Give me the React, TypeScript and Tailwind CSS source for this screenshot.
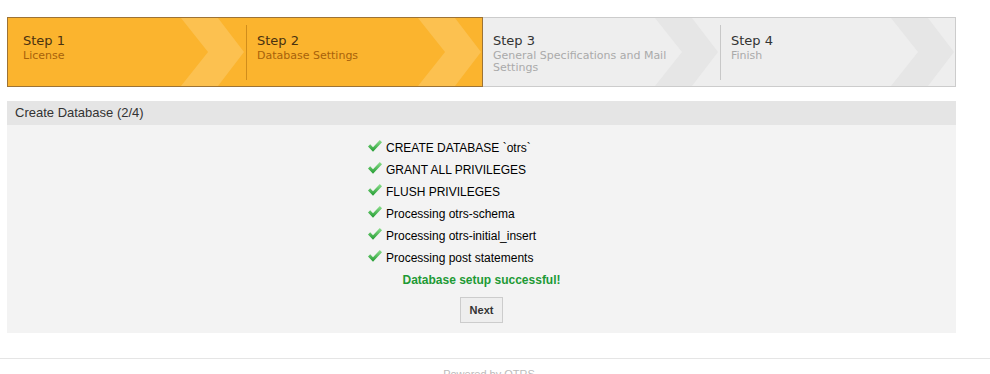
const steps = [
  { title: 'Step 1', sub: 'License', done: true },
  { title: 'Step 2', sub: 'Database Settings', done: true },
  { title: 'Step 3', sub: 'General Specifications and Mail Settings', done: false },
  { title: 'Step 4', sub: 'Finish', done: false },
];

const items = [
  'CREATE DATABASE `otrs`',
  'GRANT ALL PRIVILEGES',
  'FLUSH PRIVILEGES',
  'Processing otrs-schema',
  'Processing otrs-initial_insert',
  'Processing post statements',
];

function Chevron({ color }: { color: string }) {
  return (
    <svg className="absolute right-0 top-0 h-full w-[64px]" viewBox="0 0 64 68" preserveAspectRatio="none">
      <polygon points="0,0 37,0 63,34 37,68 0,68 27,34" fill={color} />
    </svg>
  );
}

function CheckIcon() {
  return (
    <svg width="14" height="13" viewBox="0 0 14 13" className="mr-[4px] mt-[-4px] shrink-0">
      <defs>
        <linearGradient id="chk" x1="0" y1="0" x2="0" y2="1">
          <stop offset="0" stopColor="#8ee08e" />
          <stop offset="1" stopColor="#1f9a2f" />
        </linearGradient>
      </defs>
      <polygon points="0,6.5 2.2,4.3 5,7.2 11.8,0 14,2.2 5,11.8" fill="url(#chk)" />
    </svg>
  );
}

function Step({ step, index }: { step: (typeof steps)[number]; index: number }) {
  const first = index === 0 || index === 2;
  return (
    <div className="relative flex h-full flex-1 items-center overflow-hidden">
      <Chevron color={step.done ? '#fcc150' : '#e6e6e6'} />
      {!first && (
        <div className={`ml-px h-[55px] w-px ${step.done ? 'bg-[#d08d1c]' : 'bg-[#c8c8c8]'}`} />
      )}
      <div
        className={`relative self-start pt-[15px] ${index === 0 ? 'pl-[15px]' : 'pl-[10px]'} w-[200px] font-['DejaVu_Sans',sans-serif]`}
      >
        <div className={`text-[13px] leading-[16px] ${step.done ? 'text-[#4a3210]' : 'text-[#333]'}`}>
          {step.title}
        </div>
        <div
          className={`mt-px text-[11px] leading-[12px] ${step.done ? 'text-[#a8620a]' : 'text-[#aaa]'} ${index === 2 ? 'w-[184px]' : ''}`}
        >
          {step.sub}
        </div>
      </div>
    </div>
  );
}

export default function App() {
  return (
    <div className="min-h-[374px] bg-white font-['Liberation_Sans',Arial,sans-serif]">
      <div className="ml-[7px] w-[949px] pt-[17px]">
        {/* Wizard steps */}
        <div className="flex h-[70px]">
          <div className="flex w-[476px] border border-[#9d7335] bg-[#fbb42e]">
            <Step step={steps[0]} index={0} />
            <Step step={steps[1]} index={1} />
          </div>
          <div className="flex w-[473px] border border-l-0 border-[#cccccc] bg-[#eeeeee]">
            <Step step={steps[2]} index={2} />
            <Step step={steps[3]} index={3} />
          </div>
        </div>

        {/* Panel */}
        <div className="mt-[14px]">
          <div className="flex h-[24px] items-center bg-[#e5e5e5] pl-[8px] text-[13px] text-[#333]">
            Create Database (2/4)
          </div>
          <div className="bg-[#f3f3f3] pb-[10px] pt-[12px]">
            <ul className="mx-auto w-[227px]">
              {items.map((item) => (
                <li key={item} className="flex h-[22px] items-center text-[12px] text-black">
                  <CheckIcon />
                  {item}
                </li>
              ))}
            </ul>
            <div className="flex h-[22px] items-center justify-center text-[12px] font-bold text-[#1d9a35]">
              Database setup successful!
            </div>
            <div className="mt-[6px] flex justify-center">
              <button className="h-[26px] w-[43px] border border-[#cccccc] bg-[#eeeeee] text-[11px] font-bold text-[#333]">
                Next
              </button>
            </div>
          </div>
        </div>
      </div>

      {/* Footer */}
      <div className="mt-[25px] border-t border-[#e5e5e5] pt-[7px] text-center text-[11px] text-[#bbb]">
        <span className="mr-[12px]">Powered by OTRS</span>
      </div>
    </div>
  );
}
